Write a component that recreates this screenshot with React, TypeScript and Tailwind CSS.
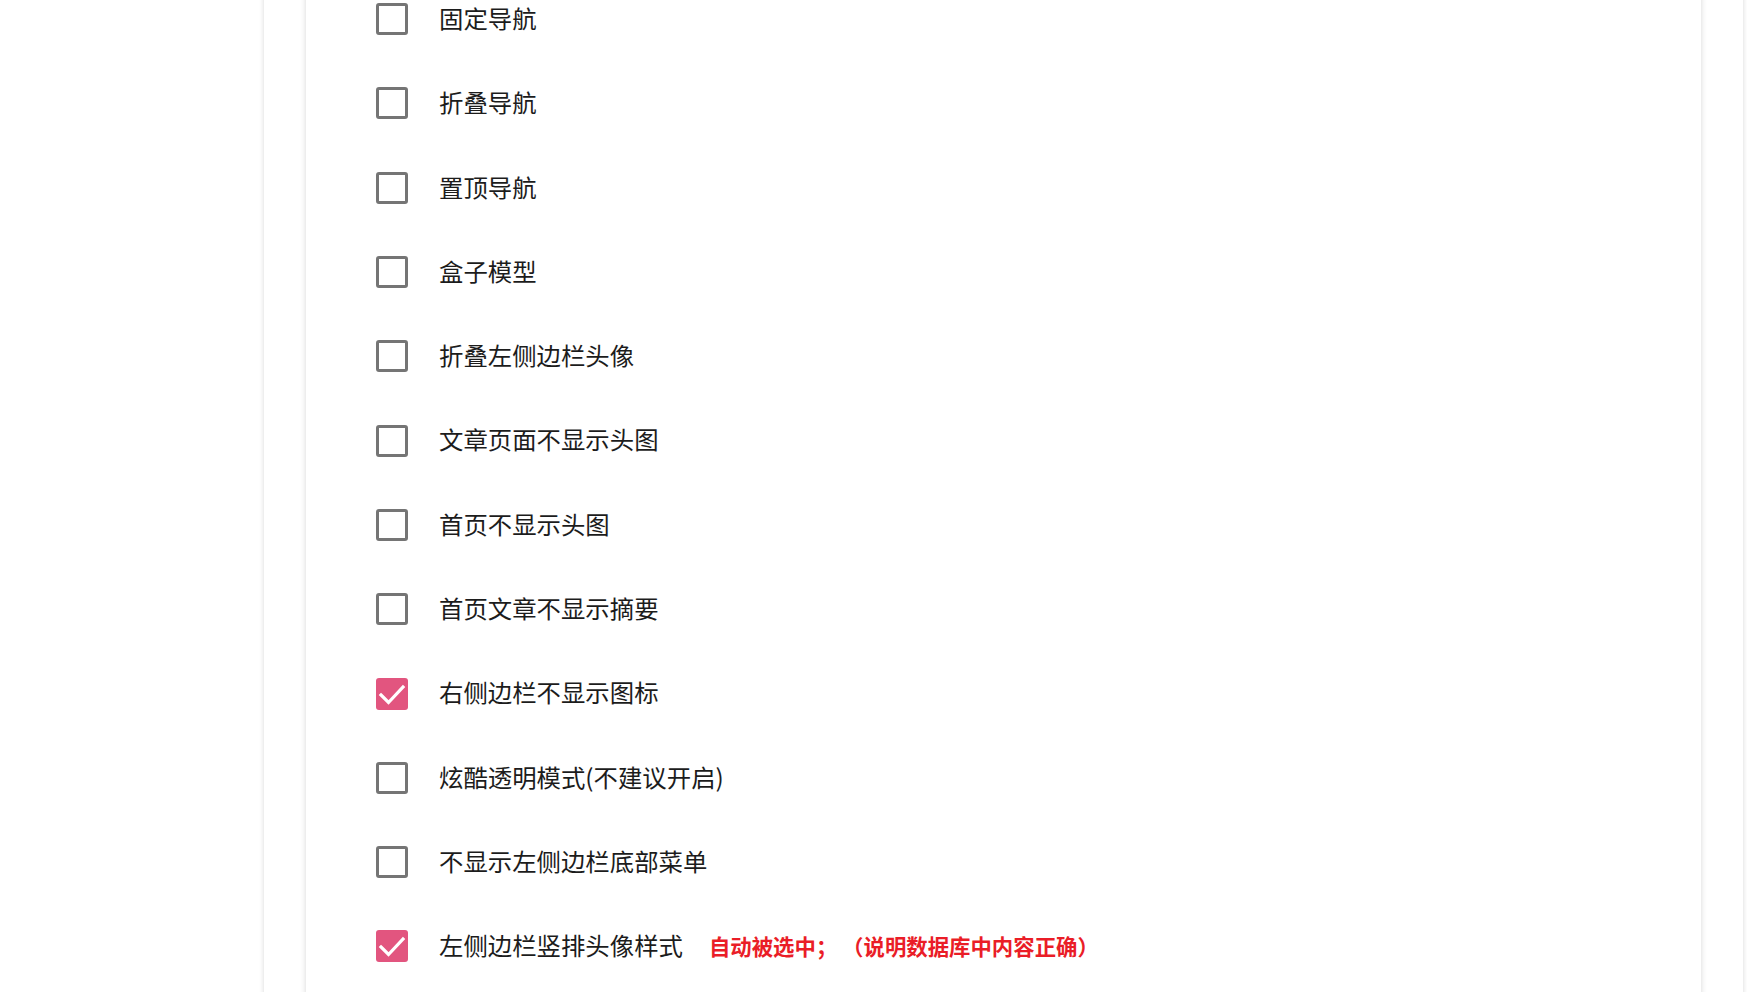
const OPTIONS = [
  { label: "固定导航", checked: false },
  { label: "折叠导航", checked: false },
  { label: "置顶导航", checked: false },
  { label: "盒子模型", checked: false },
  { label: "折叠左侧边栏头像", checked: false },
  { label: "文章页面不显示头图", checked: false },
  { label: "首页不显示头图", checked: false },
  { label: "首页文章不显示摘要", checked: false },
  { label: "右侧边栏不显示图标", checked: true },
  { label: "炫酷透明模式(不建议开启)", checked: false },
  { label: "不显示左侧边栏底部菜单", checked: false },
  { label: "左侧边栏竖排头像样式", checked: true, note: "自动被选中； （说明数据库中内容正确）" },
];

function Checkbox({ checked }: { checked: boolean }) {
  if (checked) {
    return (
      <span className="w-[32px] h-[32px] shrink-0 rounded-[3px] bg-[#e2557f] flex items-center justify-center">
        <svg width="32" height="32" viewBox="0 0 32 32" fill="none">
          <path d="M5 17 L12.5 24.5 L27 9" stroke="#fff" strokeWidth="3.2" strokeLinecap="square" />
        </svg>
      </span>
    );
  }
  return <span className="w-[32px] h-[32px] shrink-0 rounded-[3px] border-[3px] border-[#757575] bg-white" />;
}

export default function App() {
  return (
    <div
      className="h-screen overflow-hidden bg-white"
      style={{ fontFamily: '"Noto Sans CJK SC", "Noto Sans", sans-serif' }}
    >
      <div className="ml-[264px] w-[1479px] -mt-[23px] h-[1060px] bg-white px-[42px] shadow-[0_0_5px_rgba(0,0,0,0.16)]">
        <div className="h-full bg-white shadow-[0_0_6px_rgba(0,0,0,0.16)] pl-[70px]">
          <ul className="flex flex-col">
            {OPTIONS.map((opt) => (
              <li key={opt.label} className="h-[84.3px] flex items-center">
                <Checkbox checked={opt.checked} />
                <span className="ml-[31px] -mt-[2px] text-[24.4px] leading-none text-[#1c1c1c]">{opt.label}</span>
                {opt.note && (
                  <span className="ml-[26px] -mt-[2px] text-[21.4px] leading-none font-bold text-[#ea1d27]">
                    {opt.note}
                  </span>
                )}
              </li>
            ))}
          </ul>
        </div>
      </div>
    </div>
  );
}
